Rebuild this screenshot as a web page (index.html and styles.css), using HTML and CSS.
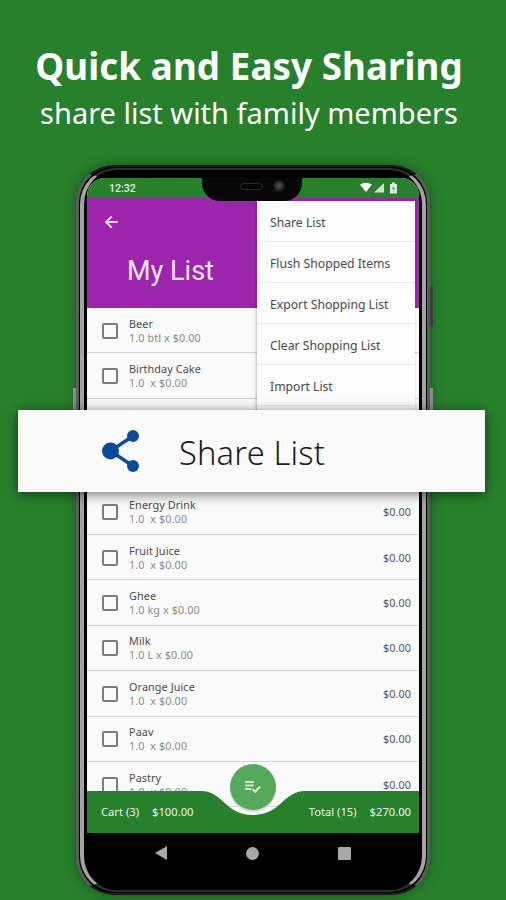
FILE: index.html
```html
<!DOCTYPE html>
<html lang="en">
<head>
  <meta charset="UTF-8">
  <title>Quick and Easy Sharing</title>
  <meta name="viewport" content="width=device-width, initial-scale=1">
  <link rel="stylesheet" href="styles.css">
</head>
<body>
  <div class="page">
    <!-- Headline -->
    <div class="headline">
      <h1>Quick and Easy Sharing</h1>
      <p>share list with family members</p>
    </div>

    <!-- Phone -->
    <div class="phone">
      <span class="side-btn side-btn-right"></span>
      <span class="side-btn side-btn-right-low"></span>
      <span class="side-btn side-btn-left"></span>
      <div class="notch">
        <span class="speaker"></span>
        <span class="camera"></span>
      </div>

      <div class="screen">
        <div class="status-bar">
          <span class="clock">12:32</span>
          <svg class="status-icons" width="38" height="12" viewBox="0 0 38 12">
            <path d="M0 2.5 Q6 -1 12 2.5 L6 10 Z" fill="#fff"/>
            <path d="M14 10.5 L24 1 V10.5 Z" fill="#cfe3cf"/>
            <path d="M30 2 H32 V0.5 H35 V2 H37 V11.5 H30 Z" fill="#dcebdc"/>
            <path d="M33.5 3.5 L32 7 H33.5 V9.5 L35 6 H33.5 Z" fill="#5f9f62"/>
          </svg>
        </div>

        <div class="app-bar">
          <svg class="back-arrow" width="18" height="18" viewBox="0 0 24 24">
            <path d="M21 10.8H8.6l5.4-5.4L12 3.5 3.5 12l8.5 8.5 2-1.9-5.4-5.4H21z" fill="#f3d9f7"/>
          </svg>
          <div class="app-title">My List</div>
        </div>

        <div class="list">
          <div class="row"><span class="check"></span><div class="row-text"><div class="name">Beer</div><div class="sub">1.0 btl x $0.00</div></div><span class="price">$0.00</span></div>
          <div class="row"><span class="check"></span><div class="row-text"><div class="name">Birthday Cake</div><div class="sub">1.0&nbsp; x $0.00</div></div><span class="price">$0.00</span></div>
          <div class="row"></div>
          <div class="row"></div>
          <div class="row"><span class="check"></span><div class="row-text"><div class="name">Energy Drink</div><div class="sub">1.0&nbsp; x $0.00</div></div><span class="price">$0.00</span></div>
          <div class="row"><span class="check"></span><div class="row-text"><div class="name">Fruit Juice</div><div class="sub">1.0&nbsp; x $0.00</div></div><span class="price">$0.00</span></div>
          <div class="row"><span class="check"></span><div class="row-text"><div class="name">Ghee</div><div class="sub">1.0 kg x $0.00</div></div><span class="price">$0.00</span></div>
          <div class="row"><span class="check"></span><div class="row-text"><div class="name">Milk</div><div class="sub">1.0 L x $0.00</div></div><span class="price">$0.00</span></div>
          <div class="row"><span class="check"></span><div class="row-text"><div class="name">Orange Juice</div><div class="sub">1.0&nbsp; x $0.00</div></div><span class="price">$0.00</span></div>
          <div class="row"><span class="check"></span><div class="row-text"><div class="name">Paav</div><div class="sub">1.0&nbsp; x $0.00</div></div><span class="price">$0.00</span></div>
          <div class="row"><span class="check"></span><div class="row-text"><div class="name">Pastry</div><div class="sub">1.0&nbsp; x $0.00</div></div><span class="price">$0.00</span></div>
        </div>

        <!-- Popup menu -->
        <div class="menu">
          <div class="menu-item">Share List</div>
          <div class="menu-item">Flush Shopped Items</div>
          <div class="menu-item">Export Shopping List</div>
          <div class="menu-item">Clear Shopping List</div>
          <div class="menu-item">Import List</div>
        </div>

        <!-- Bottom bar with curved cut-out -->
        <div class="bottom-bar">
          <svg class="bar-shape" width="332" height="42" viewBox="0 0 332 42">
            <path d="M0 0 H114 C136 0 138 24 166 24 C194 24 196 0 218 0 H332 V42 H0 Z" fill="#27802c"/>
          </svg>
          <div class="bar-text">
            <div class="bar-group"><span>Cart (3)</span><span>$100.00</span></div>
            <div class="bar-group"><span>Total (15)</span><span>$270.00</span></div>
          </div>
        </div>
        <div class="fab">
          <svg width="18" height="14" viewBox="0 0 20 16">
            <path d="M1 1 H11 V3.5 H1 Z M1 5 H11 V7.5 H1 Z M1 9 H8 V11.5 H1 Z" fill="#cfe6d0"/>
            <path d="M9.5 10.5 L12.5 13.5 L18 7.5" fill="none" stroke="#fff" stroke-width="2"/>
          </svg>
        </div>
      </div>

      <div class="nav-bar">
        <span class="nav-back"></span>
        <span class="nav-home"></span>
        <span class="nav-square"></span>
      </div>
    </div>

    <!-- Highlighted menu entry -->
    <div class="banner">
      <svg class="share-icon" width="44" height="48" viewBox="0 0 44 48">
        <path d="M33 9 L10.5 24 L33 39" fill="none" stroke="#0d4a9c" stroke-width="3.4"/>
        <circle cx="33" cy="9" r="6" fill="#0d4a9c"/>
        <circle cx="10.5" cy="24" r="8.5" fill="#0d4a9c"/>
        <circle cx="33" cy="39" r="6" fill="#0d4a9c"/>
      </svg>
      <span class="banner-text">Share List</span>
    </div>
  </div>
</body>
</html>
```

FILE: styles.css
```css
/* General */
html, body {
  margin: 0;
  padding: 0;
}
body {
  font-family: "Noto Sans", Arial, sans-serif;
}
.page {
  position: relative;
  width: 506px;
  height: 900px;
  overflow: hidden;
  background-color: #27802c;
  display: flex;
  flex-direction: column;
  align-items: center;
}

/* Headline */
.headline {
  height: 165px;
  box-sizing: border-box;
  padding: 41px 8px 0 0;
  text-align: center;
  color: #fff;
}
.headline h1 {
  margin: 0;
  font-size: 36.7px;
  line-height: 50px;
  font-weight: 700;
  letter-spacing: 0.1px;
  white-space: nowrap;
}
.headline p {
  margin: 0;
  font-size: 29px;
  line-height: 44px;
  white-space: nowrap;
}

/* Phone */
.phone {
  position: relative;
  flex: none;
  width: 354px;
  height: 730px;
  box-sizing: border-box;
  padding: 11px 8px 0;
  background-color: #000;
  border-style: solid;
  border-width: 2px 3px;
  border-color: #1c1c1c #5c5c5c;
  border-radius: 38px;
  box-shadow: 0 0 14px rgba(0, 0, 0, 0.35);
}
/* light metal edge inside the frame */
.phone::before {
  content: "";
  position: absolute;
  left: 1px;
  right: 1px;
  top: 1px;
  bottom: 1px;
  border-style: solid;
  border-width: 2px 4px;
  border-color: #2e2e2e #a4a4a4;
  border-radius: 36px;
}
.side-btn {
  position: absolute;
  width: 3px;
  background-color: #3c3c3c;
}
.side-btn-right {
  right: -6px;
  top: 120px;
  height: 40px;
}
.side-btn-right-low {
  right: -6px;
  top: 221px;
  height: 30px;
  background-color: #8c8c8c;
}
.side-btn-left {
  left: -6px;
  top: 221px;
  height: 30px;
  background-color: #8c8c8c;
}
.notch {
  position: absolute;
  left: 123px;
  top: 11px;
  width: 100px;
  height: 23px;
  background-color: #070707;
  border-radius: 0 0 18px 18px;
  z-index: 3;
}
.speaker {
  position: absolute;
  left: 38px;
  top: 5px;
  width: 21px;
  height: 5px;
  border: 1px solid #2a2a2a;
  border-radius: 4px;
}
.camera {
  position: absolute;
  left: 71px;
  top: 2px;
  width: 12px;
  height: 12px;
  border-radius: 50%;
  background: radial-gradient(circle at 50% 50%, #555 0, #1c1c1c 60%, #111 100%);
}

/* Screen */
.screen {
  position: relative;
  width: 332px;
  height: 655px;
  background-color: #fafafa;
  border-radius: 18px 18px 0 0;
  overflow: hidden;
  display: flex;
  flex-direction: column;
}
.status-bar {
  flex: none;
  height: 20px;
  background-color: #27802c;
  display: flex;
  align-items: center;
  justify-content: space-between;
  padding: 0 21px 0 22px;
  color: #e6f0e6;
  font-family: Roboto, Arial, sans-serif;
  font-size: 10.5px;
  font-weight: 500;
}
.app-bar {
  flex: none;
  height: 110px;
  box-sizing: border-box;
  padding: 15px 0 0 15px;
  background-color: #9d24ac;
  color: #f8e8fa;
}
.back-arrow {
  display: block;
}
.app-title {
  margin: 23px 0 0 25px;
  font-family: Roboto, Arial, sans-serif;
  font-size: 27px;
  line-height: 34px;
}

/* List */
.list {
  flex: 1;
  min-height: 0;
  overflow: hidden;
}
.row {
  height: 45.4px;
  box-sizing: border-box;
  display: flex;
  align-items: center;
  padding: 1px 8px 0 15px;
  border-bottom: 1px solid #d4d4d4;
  font-size: 10.8px;
  line-height: 14px;
  letter-spacing: 0.1px;
}
.check {
  flex: none;
  width: 12px;
  height: 12px;
  border: 2px solid #7d7d7d;
  border-radius: 2px;
  margin-right: 11px;
}
.row-text {
  flex: 1;
}
.name {
  color: #4a4a4a;
}
.sub {
  color: #8c8c8c;
}
.price {
  color: #555;
}

/* Popup menu */
.menu {
  position: absolute;
  left: 170px;
  top: 23px;
  width: 158px;
  padding-bottom: 8px;
  background-color: #fcfcfc;
  box-shadow: -1px 1px 3px rgba(0, 0, 0, 0.25);
  z-index: 2;
}
.menu-item {
  height: 41px;
  box-sizing: border-box;
  padding: 1px 0 0 13px;
  line-height: 41px;
  font-size: 12.2px;
  color: #4a4a4a;
  border-bottom: 1px solid #ececec;
}

/* Bottom bar */
.bottom-bar {
  position: absolute;
  left: 0;
  bottom: 0;
  width: 332px;
  height: 42px;
}
.bar-shape {
  display: block;
}
.bar-text {
  position: absolute;
  left: 14px;
  right: 8px;
  bottom: 14px;
  display: flex;
  justify-content: space-between;
  color: #eef5ee;
  font-size: 11.2px;
  line-height: 14px;
}
.bar-group {
  display: flex;
  gap: 13px;
}
.fab {
  position: absolute;
  left: 143px;
  bottom: 23px;
  width: 46px;
  height: 46px;
  display: flex;
  align-items: center;
  justify-content: center;
  border-radius: 50%;
  background-color: #55a95a;
  box-shadow: 0 2px 0 #d8dcd8;
}

/* Android nav bar */
.nav-bar {
  height: 40px;
  display: flex;
  align-items: center;
  justify-content: center;
  gap: 79px;
}
.nav-back {
  width: 0;
  height: 0;
  border-top: 7px solid transparent;
  border-bottom: 7px solid transparent;
  border-right: 12px solid #a8a8a8;
}
.nav-home {
  width: 13px;
  height: 13px;
  border-radius: 50%;
  background-color: #a8a8a8;
}
.nav-square {
  width: 13px;
  height: 13px;
  border-radius: 1px;
  background-color: #a8a8a8;
}

/* Highlighted banner over the phone */
.banner {
  position: absolute;
  left: 18px;
  top: 410px;
  width: 467px;
  height: 82px;
  display: flex;
  align-items: center;
  background-color: #fafafa;
  box-shadow: 0 2px 12px rgba(0, 0, 0, 0.55);
  z-index: 5;
}
.share-icon {
  margin-left: 82px;
}
.banner-text {
  margin: 3px 0 0 35px;
  font-size: 32.6px;
  font-weight: 300;
  color: #1c1c1c;
  letter-spacing: 0.2px;
}
```
